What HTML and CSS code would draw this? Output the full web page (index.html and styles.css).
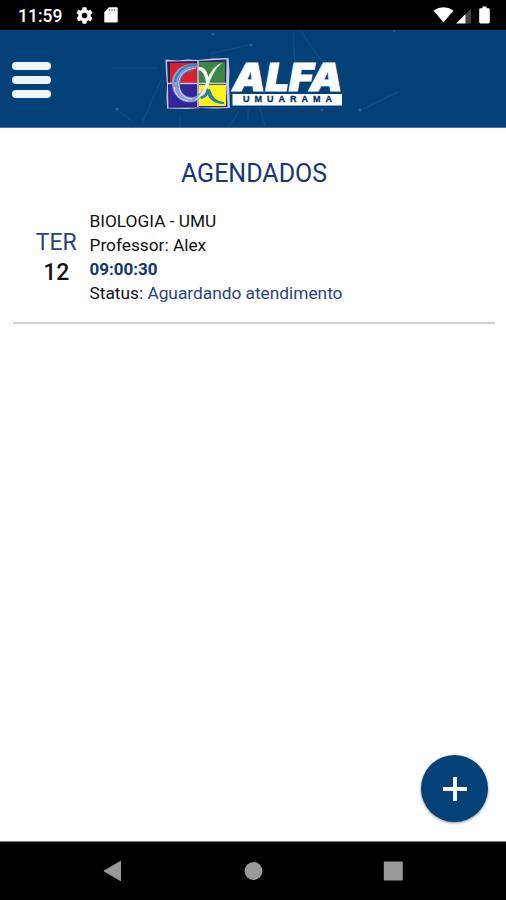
FILE: index.html
```html
<!DOCTYPE html>
<html lang="pt-BR">
<head>
    <meta charset="UTF-8">
    <meta name="viewport" content="width=device-width, initial-scale=1.0">
    <title>Agendados</title>
    <link rel="stylesheet" href="styles.css">
</head>
<body>
    <!-- Barra de status -->
    <div class="status-bar">
        <span class="clock">11:59</span>
        <svg class="icon-gear" width="17" height="17" viewBox="2 2 20 20"><path fill="#fff" d="M19.14 12.94c.04-.3.06-.61.06-.94s-.02-.64-.07-.94l2.03-1.58a.49.49 0 0 0 .12-.61l-1.92-3.32a.49.49 0 0 0-.59-.22l-2.39.96a7 7 0 0 0-1.62-.94l-.36-2.54a.48.48 0 0 0-.48-.41h-3.84c-.24 0-.43.17-.47.41l-.36 2.54c-.59.24-1.13.57-1.62.94l-2.39-.96a.48.48 0 0 0-.59.22L2.74 8.87a.48.48 0 0 0 .12.61l2.03 1.58a6 6 0 0 0 0 1.88l-2.03 1.58a.49.49 0 0 0-.12.61l1.92 3.32c.12.22.37.29.59.22l2.39-.96c.5.38 1.03.7 1.62.94l.36 2.54c.05.24.24.41.48.41h3.84c.24 0 .44-.17.47-.41l.36-2.54a7 7 0 0 0 1.62-.94l2.39.96c.22.08.47 0 .59-.22l1.92-3.32a.48.48 0 0 0-.12-.61zM12 15.3a3.3 3.3 0 1 1 0-6.6 3.3 3.3 0 0 1 0 6.6z"/></svg>
        <svg class="icon-card" width="14" height="16" viewBox="0 0 14 16"><path fill="#fff" d="M5 .3h7.500q1.200 0 1.200 1.200v12.800q0 1.200-1.200 1.200h-11q-1.200 0-1.200-1.200V5z"/><path stroke="#8a8a8a" stroke-width="1.300" d="M5.500 2v2.200M8 2v2.200M10.500 2v2.200"/></svg>
        <div class="status-right">
            <svg width="21" height="16" viewBox="0 0 21 16"><path fill="#fff" d="M.5 3.500Q10.500-3 20.500 3.500L10.500 15.500z"/></svg>
            <svg class="icon-signal" width="15" height="16" viewBox="0 0 15 16"><path fill="#444" d="M15 .5v15H9.500V6z"/><path fill="#fff" d="M9.500 6v9.500H0z"/></svg>
            <svg class="icon-battery" width="11" height="18" viewBox="0 0 11 18"><path fill="#fff" d="M3.500 .5h4v1.800h2q1.300 0 1.300 1.300v12.500q0 1.300-1.300 1.300h-8Q.2 17.400.2 16.100V3.600q0-1.300 1.300-1.300h2z"/></svg>
        </div>
    </div>

    <!-- Cabeçalho -->
    <header class="header">
        <svg class="header-bg" width="506" height="98" viewBox="0 0 506 98">
            <g fill="none" stroke="#3d74a3" stroke-width="1" opacity=".3">
                <path d="M112 38h46M142 93l19-43M116 79l18 14M180 84v14M210 24l42-10M293 2l2 33M300 0l24 34M363 79l35-17M258 72l8 26M240 80l-12 18M248 78v12"/>
            </g>
            <g fill="#4b80ab" opacity=".5">
                <circle cx="213" cy="4" r="1.500"/><circle cx="251" cy="15" r="1.500"/><circle cx="117" cy="79" r="1.500"/>
                <circle cx="322" cy="80" r="1.300"/><circle cx="360" cy="80" r="1.800"/><circle cx="394" cy="1" r="1.200"/>
            </g>
        </svg>
        <button class="menu-button" aria-label="Menu">
            <span></span>
            <span></span>
            <span></span>
        </button>
        <svg class="logo" width="178" height="54" viewBox="165 56 178 54">
            <path fill="#c3c6e4" d="M165.500 59.500l12 1 10-1 11 .5 14-1.500 16-.5 1 13-.5 13 .5 11 .5 13-16 .5-13-.5-14 1-20-.5-.5-12 .500-12-1-12z"/>
            <path fill="#29206c" d="M167 61.500l30-.5 29.500-1.500-.5 25 1.500 22.500-29 .5-30 .3-.5-24z"/>
            <path fill="#d9202d" d="M170 63h27v20h-27z"/>
            <path fill="#3b8645" d="M199 62h26v21h-26z"/>
            <path fill="#33269b" d="M169 85h28v21h-28z"/>
            <path fill="#fbf21c" d="M199 85h27v21h-27z"/>
            <path stroke="#c9c9e6" stroke-width="1.600" d="M167 83.500h60M198 61v46"/>
            <!-- letra alfa -->
            <path fill="#8f9bd3" d="M198 64c-15-2-26 7-26 19 0 14 11 21 21 19 6-1 9-6 12-11l-2-2c-4 6-8 9-13 8-7-1-11-7-10-15 1-9 8-15 18-15z"/>
            <path fill="none" stroke="#3a80c0" stroke-width="2.200" d="M197 65c-12-.5-21 7-22 17M179 88c-2-9 4-17 14-18"/>
            <path fill="none" stroke="#d3d8f0" stroke-width="1" d="M196 68c-12 1-19 9-17 19 1 7 6 12 13 12M174 87c1 8 7 13 14 14"/>
            <path fill="#e8f3ee" d="M222 63c-7 2-12 9-15 17-3 9-6 14-12 21 8-5 12-11 15-20 3-7 6-13 12-18z"/>
            <path fill="#fff" d="M198.500 67c6-1 10 5 10 14l-2 4c-1-8-3-14-8-15z"/>
            <path fill="#277bb0" d="M206 90c2 9 8 14 18 14v-2c-8-1-12-5-14-13zM207 88c-1 5-3 8-7 9l1 2c5-1 7-4 8-8z"/>
            <text class="logo-name" x="232.500" y="90.500" textLength="110" lengthAdjust="spacingAndGlyphs">ALFA</text>
            <path fill="#fff" d="M232.500 94H342v11.500H232.500z"/>
            <text class="logo-city" x="243" y="102.300" textLength="89">UMUARAMA</text>
        </svg>
    </header>

    <!-- Lista de agendamentos -->
    <main class="content">
        <h1>AGENDADOS</h1>
        <div class="appointment">
            <div class="date">
                <span class="weekday">TER</span>
                <span class="day">12</span>
            </div>
            <div class="details">
                <p class="subject">BIOLOGIA - UMU</p>
                <p class="teacher">Professor: Alex</p>
                <p class="time">09:00:30</p>
                <p class="status">Status: <span>Aguardando atendimento</span></p>
            </div>
        </div>
        <button class="add-button" aria-label="Adicionar">
            <svg width="24" height="24" viewBox="0 0 24 24"><path stroke="#fff" stroke-width="3.800" d="M12 0v24M0 12h24"/></svg>
        </button>
    </main>

    <!-- Navegação do sistema -->
    <nav class="nav-bar">
        <svg width="20" height="22" viewBox="0 0 20 22"><path fill="#999" d="M18 1.200v19.600q0 .6-.7.300L1 11.500q-.7-.5 0-1L17.300 .9q.7-.3.700.3z"/></svg>
        <svg width="20" height="20" viewBox="0 0 20 20"><circle cx="10.500" cy="10" r="9" fill="#999"/></svg>
        <svg width="20" height="20" viewBox="0 0 20 20"><rect x=".8" y=".5" width="19" height="19" rx="1" fill="#999"/></svg>
    </nav>
</body>
</html>
```
FILE: styles.css
```css
* {
    box-sizing: border-box;
}
body {
    margin: 0;
    height: 900px;
    display: flex;
    flex-direction: column;
    background: #fff;
    color: #111;
    font-family: Roboto, "Liberation Sans", sans-serif;
}
svg {
    display: block;
}
button {
    border: none;
    padding: 0;
    cursor: pointer;
}
.status-bar {
    height: 30px;
    padding: 0 16px 0 18px;
    display: flex;
    align-items: center;
    background: #000;
    color: #fff;
}
.clock {
    width: 58px;
    font-size: 17.5px;
    font-weight: 500;
    line-height: 30px;
    padding-top: 2px;
}
.icon-card {
    margin-left: 11px;
}
.status-right {
    margin-left: auto;
    display: flex;
    align-items: center;
}
.icon-signal {
    margin: 1px 8px 0 2px;
}
.header {
    position: relative;
    height: 98px;
    padding: 0 12px;
    display: flex;
    align-items: center;
    background: #044179;
    border-bottom: 1px solid #52709b;
}
/* linhas decorativas atrás do menu e do logo */
.header-bg {
    position: absolute;
    left: 0;
    top: 0;
}
.menu-button {
    position: relative;
    width: 39px;
    margin-top: 3px;
    display: flex;
    flex-direction: column;
    gap: 6px;
    background: none;
}
.menu-button span {
    height: 8px;
    border-radius: 4px;
    background: #f1f5f8;
}
.logo {
    position: relative;
    margin: 8px 0 0 114px;
    overflow: visible;
}
.logo-name {
    font-family: Inter, "Liberation Sans", sans-serif;
    font-size: 39px;
    font-weight: 900;
    font-style: italic;
    fill: #fff;
    stroke: #fff;
    stroke-width: 1px;
}
.logo-city {
    font-family: "Liberation Sans", sans-serif;
    font-size: 9px;
    font-weight: bold;
    fill: #06326b;
    stroke: #06326b;
    stroke-width: .3px;
}
.content {
    flex: 1;
    padding: 31px 11px 0 13px;
    display: flex;
    flex-direction: column;
}
h1 {
    margin: 0 0 20px;
    font-size: 25px;
    font-weight: 400;
    line-height: 30px;
    text-align: center;
    color: #153775;
}
.appointment {
    display: flex;
    padding-bottom: 17px;
    border-bottom: 2px solid #cecece;
}
.date {
    width: 76.5px;
    padding: 19px 0 0 10px;
    display: flex;
    flex-direction: column;
    align-items: center;
    font-size: 23px;
    line-height: 30px;
}
.weekday {
    color: #27427f;
}
.day {
    font-weight: 500;
}
.details p {
    margin: 0;
    font-size: 17.3px;
    line-height: 24px;
}
.details .time {
    font-size: 17px;
    font-weight: bold;
    color: #123473;
}
.status span {
    color: #27457f;
}
.add-button {
    width: 67px;
    height: 67px;
    margin: auto 7px 19px auto;
    display: flex;
    align-items: center;
    justify-content: center;
    border-radius: 50%;
    background: #044179;
    box-shadow: 0 1px 3px rgba(0, 0, 0, 0.45);
}
.nav-bar {
    height: 59px;
    padding: 0 103px;
    display: flex;
    align-items: center;
    justify-content: space-between;
    background: #000;
    border-top: 1px solid #777;
}
```
